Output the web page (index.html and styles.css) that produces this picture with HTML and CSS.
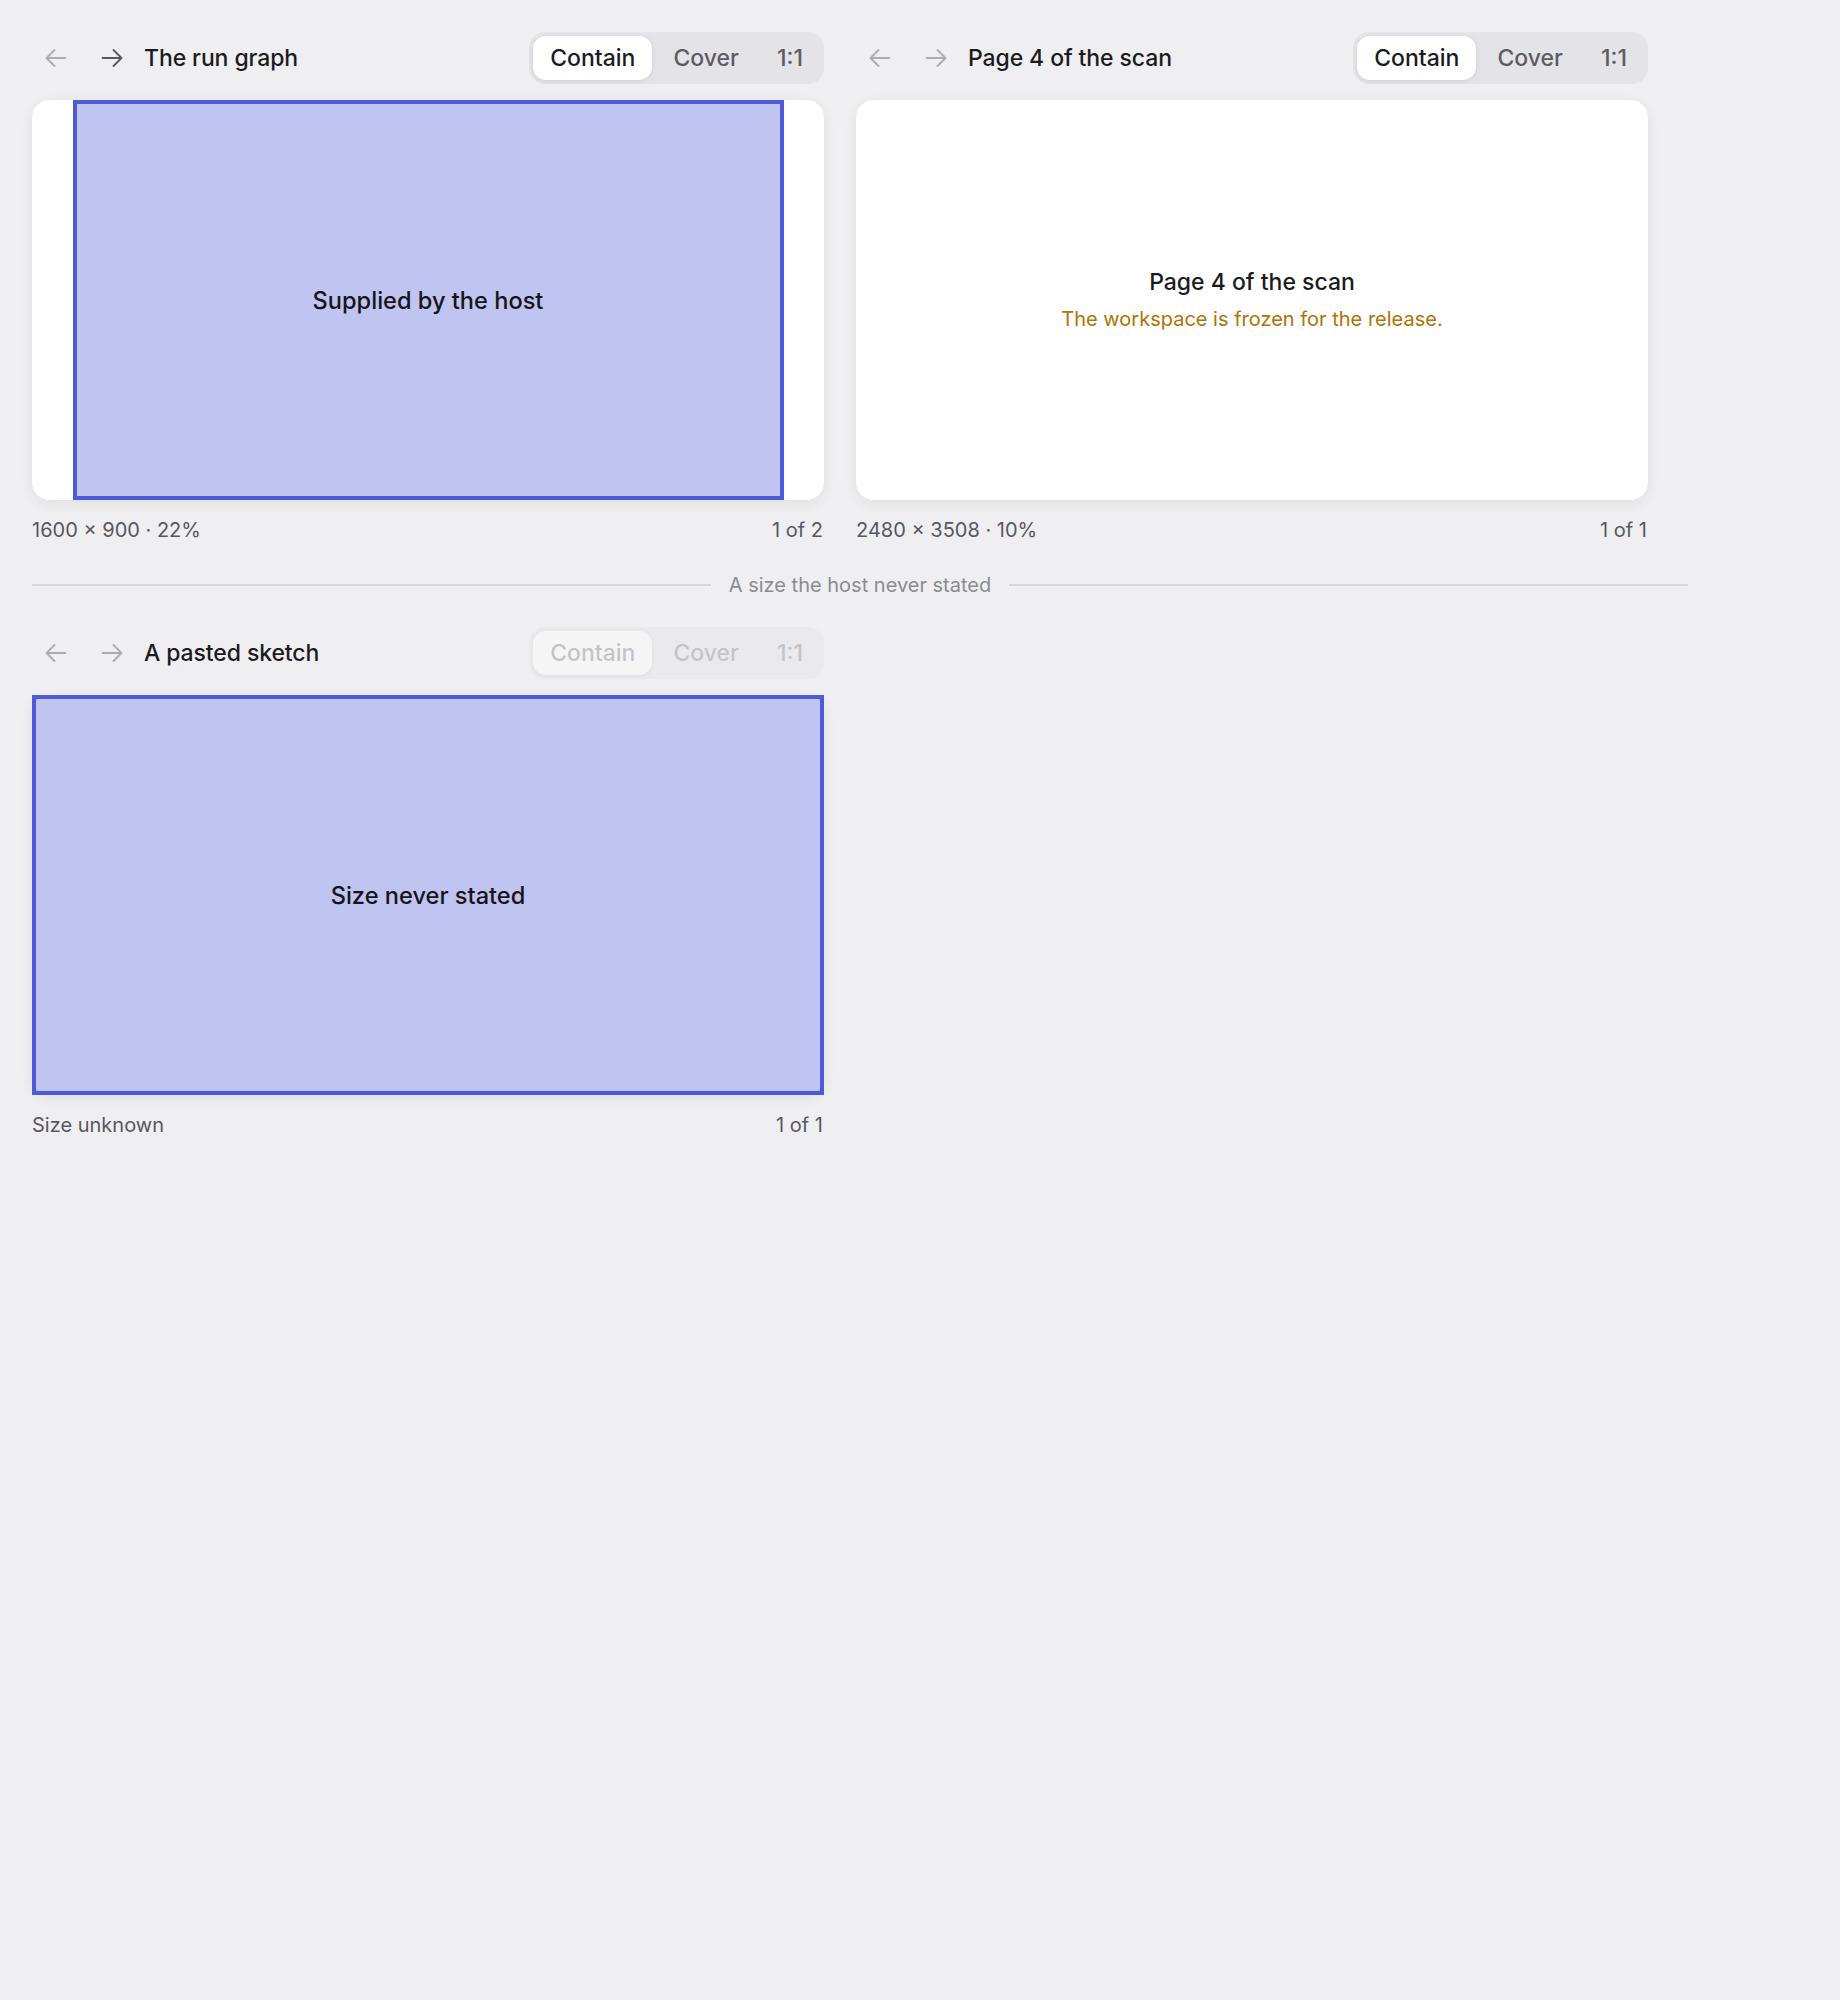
FILE: index.html
```html
<!DOCTYPE html>
<html lang="en">
<head>
<meta charset="utf-8">
<title>Viewers</title>
<link rel="stylesheet" href="styles.css">
</head>
<body>
<main class="page">
  <div class="grid">
    <section class="viewer">
      <header class="bar">
        <button class="nav is-off" aria-label="Previous"><svg viewBox="0 0 22 22"><path d="M20.5 11H1.5M9.5 3l-8 8 8 8"/></svg></button>
        <button class="nav" aria-label="Next"><svg viewBox="0 0 22 22"><path d="M1.5 11h19M12.5 3l8 8-8 8"/></svg></button>
        <h2 class="title">The run graph</h2>
        <div class="seg">
          <button class="seg-btn is-active">Contain</button>
          <button class="seg-btn">Cover</button>
          <button class="seg-btn">1:1</button>
        </div>
      </header>
      <div class="stage">
        <div class="frame frame-contain">Supplied by the host</div>
      </div>
      <footer class="meta"><span>1600 × 900 · 22%</span><span>1 of 2</span></footer>
    </section>

    <section class="viewer">
      <header class="bar">
        <button class="nav is-off" aria-label="Previous"><svg viewBox="0 0 22 22"><path d="M20.5 11H1.5M9.5 3l-8 8 8 8"/></svg></button>
        <button class="nav is-off" aria-label="Next"><svg viewBox="0 0 22 22"><path d="M1.5 11h19M12.5 3l8 8-8 8"/></svg></button>
        <h2 class="title">Page 4 of the scan</h2>
        <div class="seg">
          <button class="seg-btn is-active">Contain</button>
          <button class="seg-btn">Cover</button>
          <button class="seg-btn">1:1</button>
        </div>
      </header>
      <div class="stage stage-msg">
        <p class="msg-title">Page 4 of the scan</p>
        <p class="msg-note">The workspace is frozen for the release.</p>
      </div>
      <footer class="meta"><span>2480 × 3508 · 10%</span><span>1 of 1</span></footer>
    </section>
  </div>

  <div class="divider"><span>A size the host never stated</span></div>

  <div class="grid">
    <section class="viewer">
      <header class="bar">
        <button class="nav is-off" aria-label="Previous"><svg viewBox="0 0 22 22"><path d="M20.5 11H1.5M9.5 3l-8 8 8 8"/></svg></button>
        <button class="nav is-off" aria-label="Next"><svg viewBox="0 0 22 22"><path d="M1.5 11h19M12.5 3l8 8-8 8"/></svg></button>
        <h2 class="title">A pasted sketch</h2>
        <div class="seg is-disabled">
          <button class="seg-btn is-active">Contain</button>
          <button class="seg-btn">Cover</button>
          <button class="seg-btn">1:1</button>
        </div>
      </header>
      <div class="stage">
        <div class="frame frame-fill">Size never stated</div>
      </div>
      <footer class="meta"><span>Size unknown</span><span>1 of 1</span></footer>
    </section>
  </div>
</main>
</body>
</html>
```

FILE: styles.css
```css
* { box-sizing: border-box; }

html, body {
  margin: 0;
  padding: 0;
  background: #efeff1;
}

body {
  font-family: Inter, "Noto Sans", "Liberation Sans", sans-serif;
  color: #1b1b1f;
}

.page {
  padding: 32px;
  max-width: 1720px;
}

.grid {
  display: grid;
  grid-template-columns: 792px 792px;
  column-gap: 32px;
}

.viewer {
  display: flex;
  flex-direction: column;
}

.bar {
  display: flex;
  align-items: center;
  height: 52px;
  gap: 8px;
}

.nav {
  width: 48px;
  height: 40px;
  display: flex;
  align-items: center;
  justify-content: center;
  border: 0;
  padding: 0;
  background: none;
  color: #58585f;
}

.nav svg {
  width: 22px;
  height: 22px;
  fill: none;
  stroke: currentColor;
  stroke-width: 1.8;
  stroke-linecap: round;
  stroke-linejoin: round;
}

.nav.is-off { color: #ababb1; }

.title {
  margin: 0;
  font-size: 23px;
  font-weight: 500;
  letter-spacing: -0.1px;
  flex: 1;
}

.seg {
  display: flex;
  gap: 4px;
  padding: 4px;
  height: 52px;
  border-radius: 16px;
  background: #e4e4e8;
}

.seg-btn {
  border: 0;
  background: none;
  font: inherit;
  font-size: 23px;
  font-weight: 450;
  color: #5c5c63;
  padding: 0 17px;
  border-radius: 13px;
}

.seg-btn.is-active {
  background: #ffffff;
  color: #1b1b1f;
  box-shadow: 0 1px 4px rgba(20, 20, 40, 0.10);
}

.seg.is-disabled { opacity: 0.42; }
.seg.is-disabled .seg-btn { color: #8a8a90; }
.seg.is-disabled .seg-btn.is-active { color: #8a8a90; }

.stage {
  margin-top: 16px;
  height: 400px;
  border-radius: 18px;
  background: #ffffff;
  box-shadow: 0 3px 14px rgba(20, 20, 40, 0.07);
  display: flex;
  align-items: center;
  justify-content: center;
}

.frame {
  height: 100%;
  display: flex;
  align-items: center;
  justify-content: center;
  border: 4px solid #4f5ad6;
  background: rgba(79, 91, 213, 0.355);
  font-size: 23.6px;
  font-weight: 500;
  color: #15151a;
}

.frame-contain { width: 711px; }
.frame-fill { width: 100%; }

.stage-msg {
  flex-direction: column;
  gap: 8px;
}

.msg-title {
  margin: 0;
  font-size: 23px;
  font-weight: 500;
  line-height: 30px;
  color: #1b1b1f;
}

.msg-note {
  margin: 0;
  font-size: 20px;
  line-height: 28px;
  color: #b07306;
}

.meta {
  margin-top: 18px;
  padding-right: 1px;
  display: flex;
  justify-content: space-between;
  font-size: 20px;
  line-height: 24px;
  color: #57575e;
}

.divider {
  margin: 31px 0 30px;
  width: 1656px;
  display: flex;
  align-items: center;
  gap: 18px;
  font-size: 20px;
  line-height: 24px;
  color: #8b8b92;
}

.divider::before,
.divider::after {
  content: "";
  flex: 1;
  height: 2px;
  background: #d8d8dc;
}
```
